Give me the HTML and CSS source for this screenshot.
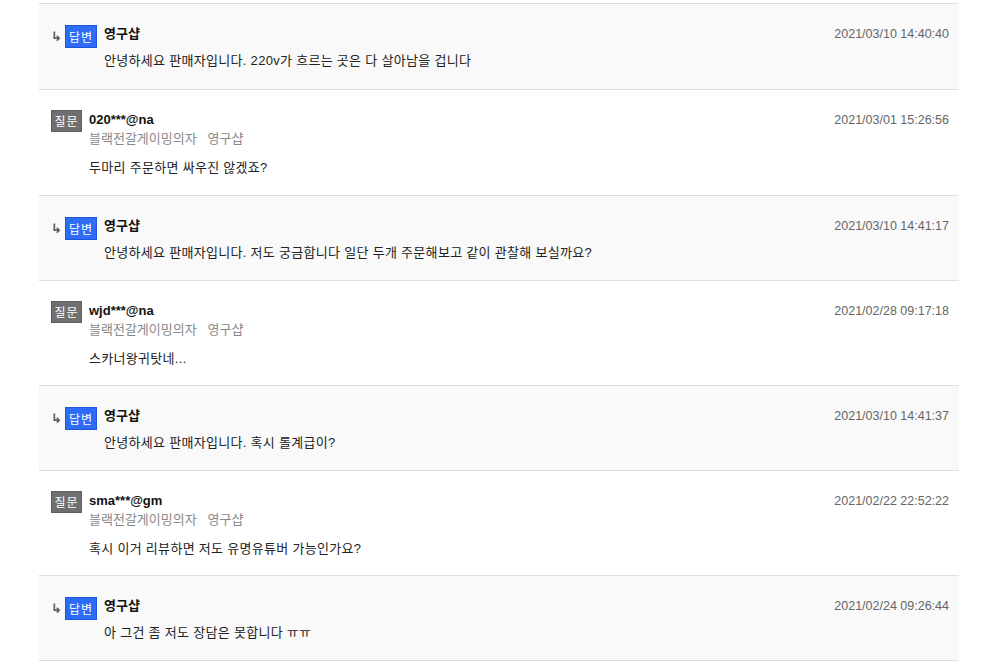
FILE: index.html
```html
<!DOCTYPE html>
<html lang="ko">
<head>
<meta charset="utf-8">
<link rel="stylesheet" href="styles.css">
</head>
<body>
<div class="list">
  <div class="row answer">
    <div class="lead"><span class="arrow">↳</span><span class="badge blue">답변</span></div>
    <div class="body">
      <div class="name">영구샵</div>
      <div class="text">안녕하세요 판매자입니다. 220v가 흐르는 곳은 다 살아남을 겁니다</div>
    </div>
    <div class="date">2021/03/10 14:40:40</div>
  </div>
  <div class="row question">
    <div class="lead"><span class="badge gray">질문</span></div>
    <div class="body">
      <div class="name">020***@na</div>
      <div class="product">블랙전갈게이밍의자&nbsp;&nbsp;&nbsp;영구샵</div>
      <div class="text">두마리 주문하면 싸우진 않겠죠?</div>
    </div>
    <div class="date">2021/03/01 15:26:56</div>
  </div>
  <div class="row answer">
    <div class="lead"><span class="arrow">↳</span><span class="badge blue">답변</span></div>
    <div class="body">
      <div class="name">영구샵</div>
      <div class="text">안녕하세요 판매자입니다. 저도 궁금합니다 일단 두개 주문해보고 같이 관찰해 보실까요?</div>
    </div>
    <div class="date">2021/03/10 14:41:17</div>
  </div>
  <div class="row question">
    <div class="lead"><span class="badge gray">질문</span></div>
    <div class="body">
      <div class="name">wjd***@na</div>
      <div class="product">블랙전갈게이밍의자&nbsp;&nbsp;&nbsp;영구샵</div>
      <div class="text">스카너왕귀탓네...</div>
    </div>
    <div class="date">2021/02/28 09:17:18</div>
  </div>
  <div class="row answer">
    <div class="lead"><span class="arrow">↳</span><span class="badge blue">답변</span></div>
    <div class="body">
      <div class="name">영구샵</div>
      <div class="text">안녕하세요 판매자입니다. 혹시 롤계급이?</div>
    </div>
    <div class="date">2021/03/10 14:41:37</div>
  </div>
  <div class="row question">
    <div class="lead"><span class="badge gray">질문</span></div>
    <div class="body">
      <div class="name">sma***@gm</div>
      <div class="product">블랙전갈게이밍의자&nbsp;&nbsp;&nbsp;영구샵</div>
      <div class="text">혹시 이거 리뷰하면 저도 유명유튜버 가능인가요?</div>
    </div>
    <div class="date">2021/02/22 22:52:22</div>
  </div>
  <div class="row answer">
    <div class="lead"><span class="arrow">↳</span><span class="badge blue">답변</span></div>
    <div class="body">
      <div class="name">영구샵</div>
      <div class="text">아 그건 좀 저도 장담은 못합니다 ㅠㅠ</div>
    </div>
    <div class="date">2021/02/24 09:26:44</div>
  </div>
</div>
</body>
</html>
```

FILE: styles.css
```css
html, body {
  margin: 0;
  padding: 0;
  background: #fff;
}
body {
  font-family: "Liberation Sans", "Noto Sans CJK KR", sans-serif;
  font-size: 13px;
  color: #222;
  padding-top: 3px;
}
.list {
  margin-left: 39px;
  width: 920px;
  border-top: 1px solid #dedede;
}
.row {
  display: flex;
  align-items: flex-start;
  border-bottom: 1px solid #dedede;
  padding: 0 10px 0 12px;
  box-sizing: border-box;
}
.row.answer {
  background: #f9f9f9;
  padding-top: 21px;
  height: 85px;
}
.row.answer:first-child {
  height: 86px;
}
.row.question {
  background: #fff;
  padding-top: 21px;
  height: 105px;
}
.row.question:nth-child(2) {
  height: 106px;
}
.lead {
  display: flex;
  align-items: center;
  flex: none;
}
.row.question .lead {
  margin-top: -1px;
}
.arrow {
  color: #555;
  font-size: 13px;
  width: 14px;
  line-height: 23px;
  font-family: "DejaVu Sans", sans-serif;
  font-weight: bold;
}
.badge {
  display: inline-block;
  color: #fff;
  font-family: "Noto Sans CJK KR", sans-serif;
  font-size: 12px;
  letter-spacing: 1px;
  text-align: center;
  box-sizing: border-box;
}
.badge.blue {
  background: #2c6cf6;
  border: 1px solid #1f55d8;
  width: 32px;
  height: 23px;
  line-height: 21px;
  margin-right: 7px;
}
.badge.gray {
  background: #6f6f6f;
  border: 1px solid #5e5e5e;
  width: 31px;
  height: 22px;
  line-height: 20px;
  margin-right: 7px;
}
.body {
  flex: 1;
}
.name {
  font-weight: bold;
  line-height: 18px;
  color: #111;
}
.product {
  color: #888;
  line-height: 20px;
}
.text {
  line-height: 18px;
  letter-spacing: 0.3px;
}
.answer .text {
  margin-top: 9px;
}
.question .text {
  margin-top: 10px;
}
.date {
  color: #666;
  font-size: 12.5px;
  line-height: 18px;
  flex: none;
}
```
